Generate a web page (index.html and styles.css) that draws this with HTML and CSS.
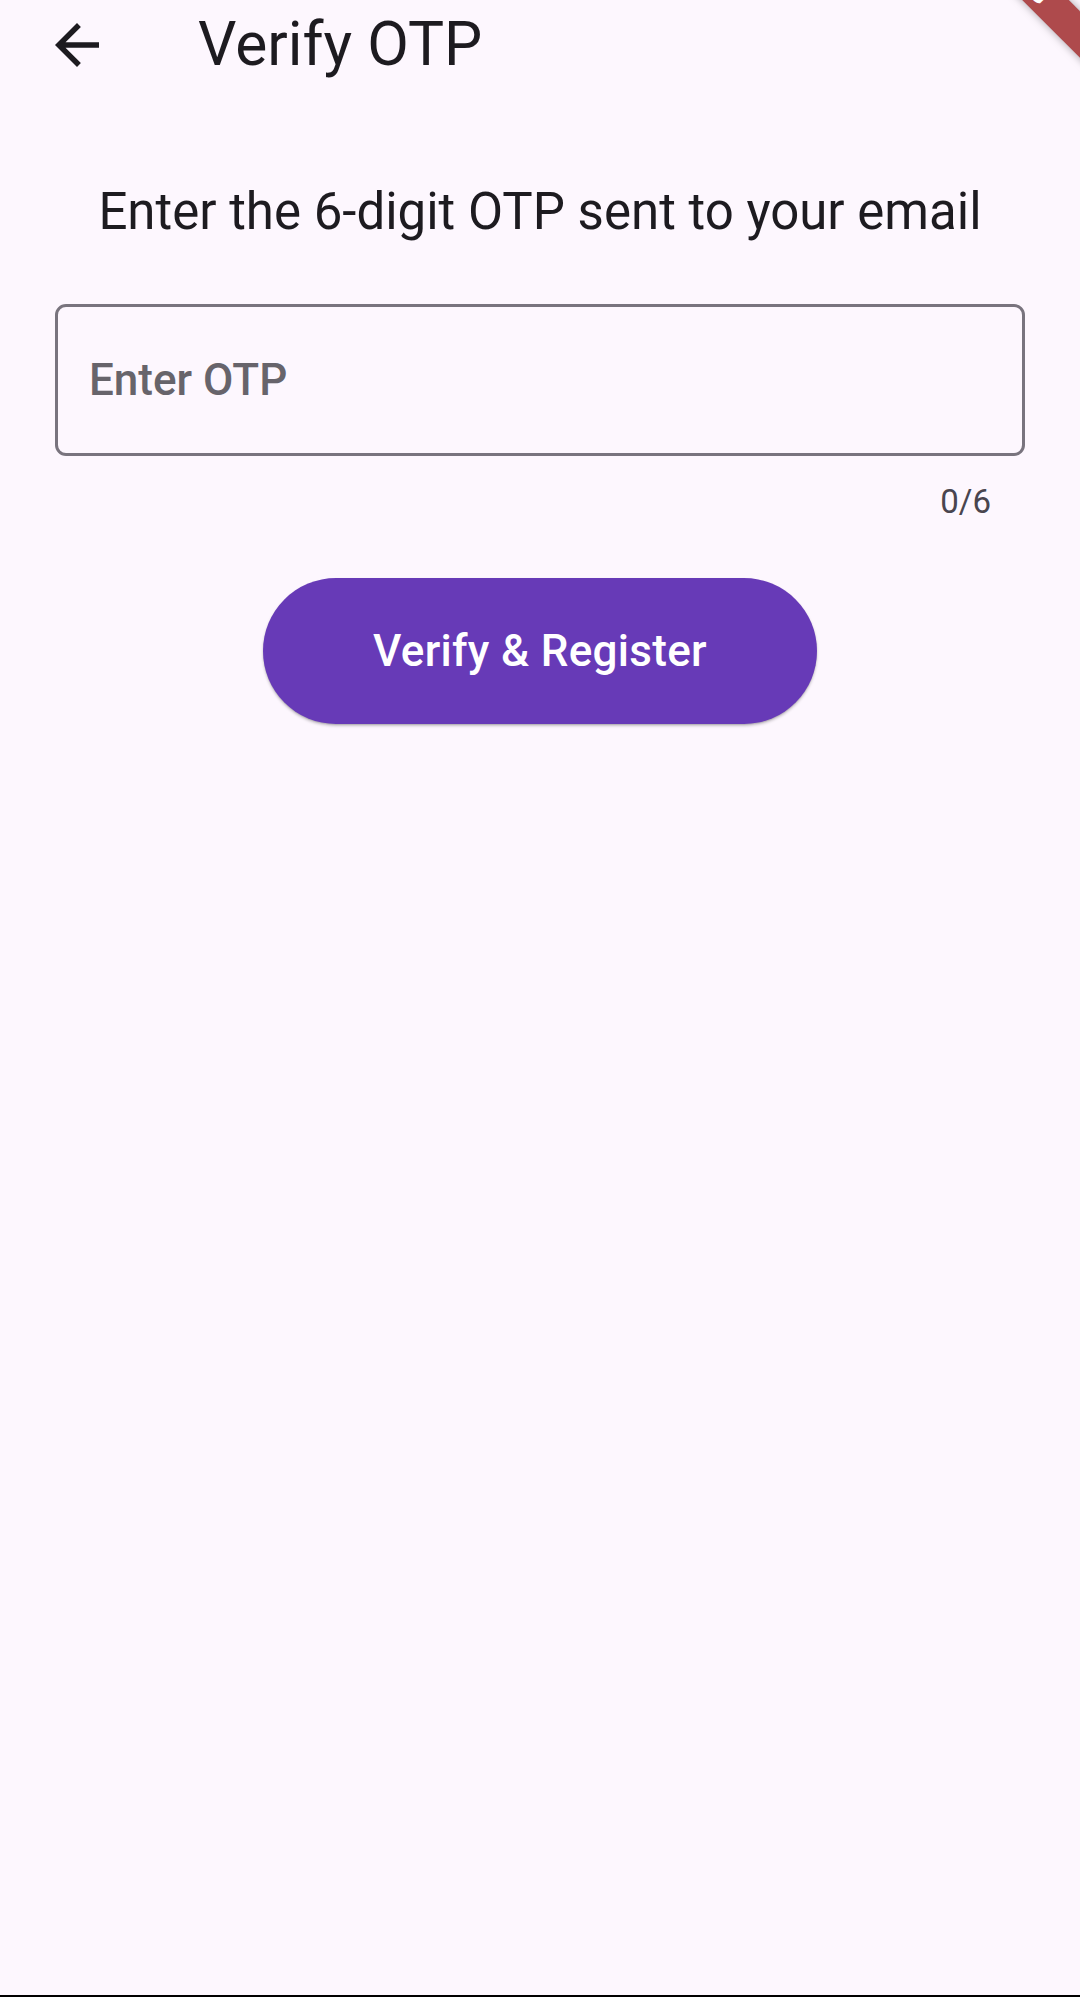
FILE: index.html
```html
<!DOCTYPE html>
<html lang="en">
<head>
<meta charset="utf-8">
<title>Verify OTP</title>
<link rel="stylesheet" href="styles.css">
</head>
<body>
<div class="page">
  <header class="appbar">
    <div class="leading">
      <svg class="back-icon" viewBox="0 0 24 24" aria-hidden="true">
        <path d="M20 11H7.83l5.59-5.59L12 4l-8 8 8 8 1.41-1.41L7.83 13H20v-2z"/>
      </svg>
    </div>
    <h1 class="title">Verify OTP</h1>
  </header>

  <main class="content">
    <p class="instruction">Enter the 6-digit OTP sent to your email</p>
    <div class="field">
      <span class="hint">Enter OTP</span>
    </div>
    <div class="counter">0/6</div>
    <div class="actions">
      <button class="primary-btn" type="button">Verify &amp; Register</button>
    </div>
  </main>

  <div class="debug-banner"><span class="debug-text">DEBUG</span></div>
  <div class="bottom-edge"></div>
</div>
</body>
</html>
```

FILE: styles.css
```css
html, body {
  margin: 0;
  padding: 0;
  background: #fdf7fe;
}

body {
  font-family: Roboto, "Noto Sans", "Liberation Sans", sans-serif;
  color: #1d1b20;
}

.page {
  position: relative;
  width: 1080px;
  height: 1997px;
  overflow: hidden;
  background: #fdf7fe;
  display: flex;
  flex-direction: column;
}

.appbar {
  display: flex;
  align-items: center;
  height: 88px;
  flex: none;
}

.leading {
  width: 154px;
  height: 88px;
  display: flex;
  align-items: center;
  justify-content: center;
  flex: none;
}

.back-icon {
  width: 66px;
  height: 66px;
  fill: #1d1b20;
  margin-top: 2px;
}

.title {
  margin: 0 0 0 44px;
  font-size: 60.5px;
  font-weight: 400;
  line-height: 71px;
  color: #1d1b20;
}

.content {
  display: flex;
  flex-direction: column;
  padding: 0 55px;
  flex: 1;
}

.instruction {
  margin: 94px 0 0;
  font-size: 51px;
  line-height: 60px;
  text-align: center;
  color: #1d1b20;
}

.field {
  margin-top: 62px;
  height: 152px;
  box-sizing: border-box;
  border: 3px solid #79747e;
  border-radius: 11px;
  display: flex;
  align-items: center;
  padding: 0 33px 0 31px;
}

.hint {
  font-size: 44px;
  line-height: 52px;
  font-weight: 500;
  color: #67646b;
}

.counter {
  margin-top: 26px;
  font-size: 33px;
  line-height: 40px;
  text-align: right;
  padding-right: 34px;
  color: #49454f;
}

.actions {
  display: flex;
  justify-content: center;
  margin-top: 56px;
}

.primary-btn {
  height: 146px;
  padding: 0 110px;
  border: none;
  border-radius: 73px;
  background: #673ab7;
  color: #ffffff;
  font-family: Roboto, "Noto Sans", "Liberation Sans", sans-serif;
  font-size: 44px;
  font-weight: 500;
  letter-spacing: 0.3px;
  box-shadow: 0 2px 3px rgba(0, 0, 0, 0.22), 0 1px 1px rgba(0, 0, 0, 0.1);
}

.debug-banner {
  position: absolute;
  left: 930px;
  top: 18px;
  width: 300px;
  height: 33px;
  background: #ae4a4c;
  transform: rotate(45deg);
  box-shadow: 0 0 8px rgba(0, 0, 0, 0.35);
  display: flex;
  align-items: center;
  justify-content: flex-end;
  padding-right: 198px;
  box-sizing: border-box;
}

.debug-text {
  color: #ffffff;
  font-size: 27px;
  font-weight: 900;
  line-height: 33px;
  letter-spacing: 1px;
}

.bottom-edge {
  position: absolute;
  left: 0;
  right: 0;
  bottom: 0;
  height: 2px;
  background: #000000;
}
```
